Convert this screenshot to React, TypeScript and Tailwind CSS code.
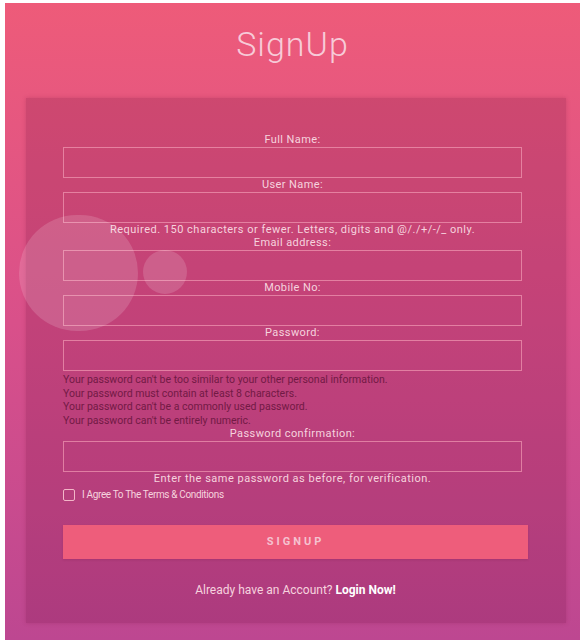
import React from 'react';

const font = { fontFamily: 'Roboto, "Noto Sans", sans-serif' };

function Field({ label, type = 'text' }: { label: string; type?: string }) {
  return (
    <>
      <label className="block w-[459px] text-center text-[11px] leading-[13px] tracking-[0.4px] text-[#f6d3de]">
        {label}
      </label>
      <input
        type={type}
        className="mt-px block h-[31px] w-[459px] border border-[#f19ab4]/70 bg-transparent outline-none"
      />
    </>
  );
}

export default function App() {
  return (
    <div className="min-h-screen bg-white pl-[5px] pt-[3px]" style={font}>
      <div className="relative h-[637px] overflow-hidden bg-gradient-to-b from-[#ee5b79] via-[#d9508a] to-[#bd4791]">
        {/* soft bubbles */}
        <div className="pointer-events-none absolute left-[14px] top-[212px] h-[116px] w-[119px] rounded-full bg-white/15" />
        <div className="pointer-events-none absolute left-[138px] top-[247px] h-[44px] w-[44px] rounded-full bg-white/15" />

        <h1 className="pt-[21px] text-center text-[34px] font-light leading-[40px] tracking-[1px] text-[#f7cbd8]">
          SignUp
        </h1>

        <div className="ml-[21px] mt-[34px] h-[525px] w-[540px] bg-[#6a0c38]/20 pl-[37px] pt-[35px] shadow-[0_0_4px_rgba(120,20,60,0.25)]">
          <form className="flex flex-col">
            <Field label="Full Name:" />
            <Field label="User Name:" />
            <p className="w-[459px] text-center text-[11px] leading-[13px] tracking-[0.5px] text-[#f6d3de]">
              Required. 150 characters or fewer. Letters, digits and @/./+/-/_ only.
            </p>
            <Field label="Email address:" type="email" />
            <Field label="Mobile No:" />
            <Field label="Password:" type="password" />
            <ul className="mt-[2px] text-[10.5px] leading-[13.6px] text-[#721a45]">
              <li>Your password can't be too similar to your other personal information.</li>
              <li>Your password must contain at least 8 characters.</li>
              <li>Your password can't be a commonly used password.</li>
              <li>Your password can't be entirely numeric.</li>
            </ul>
            <Field label="Password confirmation:" type="password" />
            <p className="w-[459px] text-center text-[11px] leading-[14px] tracking-[0.5px] text-[#f6d3de]">
              Enter the same password as before, for verification.
            </p>

            <label className="mt-[3px] flex items-center gap-[7px]">
              <span className="h-[12px] w-[12px] rounded-[2px] border border-[#f3b6c8]" />
              <span className="text-[10px] leading-[12px] tracking-[-0.35px] text-[#f6d3de]">
                I Agree To The Terms &amp; Conditions
              </span>
            </label>

            <button
              type="button"
              className="mt-[24px] h-[34px] w-[465px] bg-[#ee5d7b] text-[11px] font-bold tracking-[3px] text-[#f5c2d0] shadow-[0_1px_2px_rgba(120,20,60,0.2)]"
            >
              SIGNUP
            </button>

            <p className="mt-[24px] w-[465px] text-center text-[12px] leading-[14px] text-[#f6d3de]">
              Already have an Account? <span className="font-bold text-white">Login Now!</span>
            </p>
          </form>
        </div>
      </div>
    </div>
  );
}
